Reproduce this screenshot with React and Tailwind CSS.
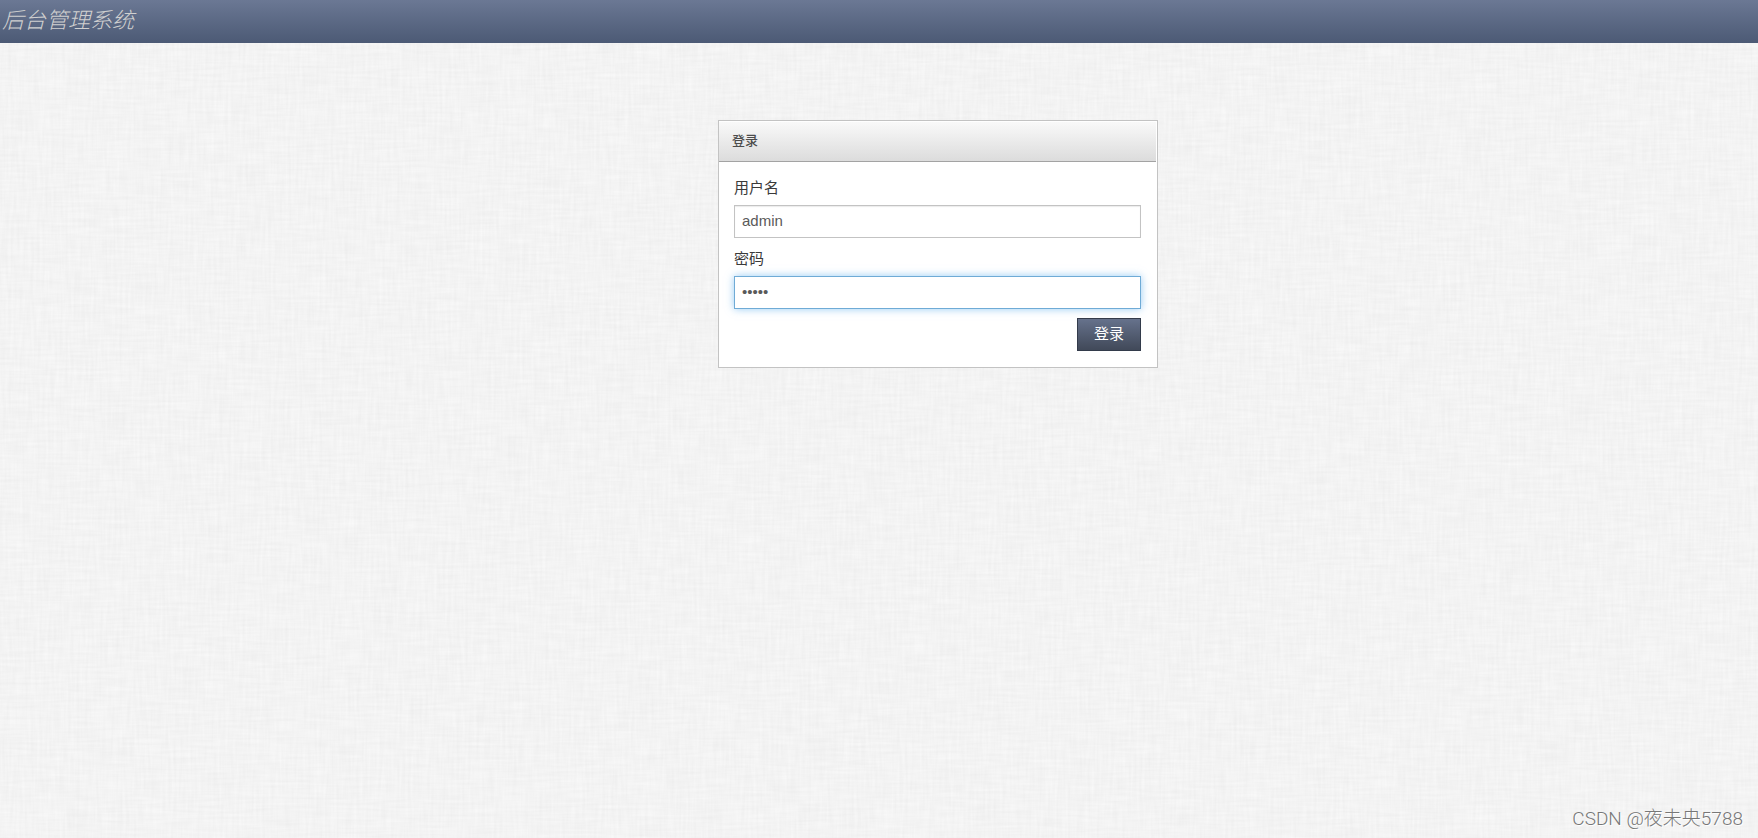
import React, { useState } from "react";

const LinenBackground = () => (
  <svg className="absolute inset-0 h-full w-full" aria-hidden="true">
    <filter id="weft" x="0" y="0" width="100%" height="100%" colorInterpolationFilters="sRGB">
      <feTurbulence type="fractalNoise" baseFrequency="0.03 0.35" numOctaves="2" seed="4" />
      <feColorMatrix values="0.07 0 0 0 0.918  0.07 0 0 0 0.918  0.07 0 0 0 0.918  0 0 0 0 1" />
    </filter>
    <filter id="warp" x="0" y="0" width="100%" height="100%" colorInterpolationFilters="sRGB">
      <feTurbulence type="fractalNoise" baseFrequency="0.35 0.03" numOctaves="2" seed="9" />
      <feColorMatrix values="0.07 0 0 0 0.918  0.07 0 0 0 0.918  0.07 0 0 0 0.918  0 0 0 0 0.5" />
    </filter>
    <rect width="100%" height="100%" filter="url(#weft)" />
    <rect width="100%" height="100%" filter="url(#warp)" />
  </svg>
);

const Field = ({ id, label, type, value, onChange, autoFocus }) => (
  <div className="flex flex-col">
    <label htmlFor={id} className="mb-[5px] text-[15px] leading-6 text-[#3a3a3a]">
      {label}
    </label>
    <input
      id={id}
      type={type}
      value={value}
      onChange={(e) => onChange(e.target.value)}
      autoFocus={autoFocus}
      className="h-[33px] w-full border border-[#c3c3c3] bg-white px-[7px] pb-[2px] text-[15px] text-[#5a5a5a] caret-transparent shadow-[inset_0_1px_1px_rgba(0,0,0,0.08)] outline-none focus:border-[#6fabd6] focus:shadow-[0_0_8px_rgba(82,168,236,0.6)]"
    />
  </div>
);

const App = () => {
  const [username, setUsername] = useState("admin");
  const [password, setPassword] = useState("admin");

  return (
    <div className="relative flex min-h-screen flex-col bg-[#f3f3f3] font-['Liberation_Sans','Noto_Sans_CJK_SC',sans-serif]">
      <LinenBackground />
      <header className="relative flex h-[43px] items-center bg-linear-to-b from-[#6b7894] to-[#4c5a75] px-[2px] pb-[2px]">
        <h1 className="text-[22px] leading-8 font-light text-[#d0d0d0] italic">后台管理系统</h1>
      </header>

      <main className="relative grid grow grid-cols-[718fr_440fr_600fr] items-start pt-[77px]">
        <section className="col-start-2 border border-[#c3c3c3] bg-white">
          <div className="mr-px flex h-[41px] items-center border-b border-[#a3a3a3] bg-linear-to-b from-[#fafafa] to-[#dcdcdc] px-[13px] shadow-[inset_0_1px_0_#ffffff]">
            <h2 className="text-[13px] leading-5 font-medium text-[#4c4c4c]">登录</h2>
          </div>
          <form
            className="flex flex-col gap-[9px] pt-[14px] pr-4 pb-4 pl-[15px]"
            onSubmit={(e) => e.preventDefault()}
          >
            <Field id="username" label="用户名" type="text" value={username} onChange={setUsername} />
            <Field
              id="password"
              label="密码"
              type="password"
              value={password}
              onChange={setPassword}
              autoFocus
            />
            <button
              type="submit"
              className="h-[33px] w-16 self-end border border-[#333b4b] bg-linear-to-b from-[#66728c] to-[#414959] text-[15px] text-white"
            >
              登录
            </button>
          </form>
        </section>
      </main>

      <footer className="relative flex justify-end px-[15px] pb-[5px]">
        <p className="font-['Roboto','Noto_Sans_CJK_SC',sans-serif] text-[19px] leading-7 font-light text-[#777777] [text-shadow:1px_1px_0_#ffffff]">
          CSDN @夜未央5788
        </p>
      </footer>
    </div>
  );
};

export default App;
